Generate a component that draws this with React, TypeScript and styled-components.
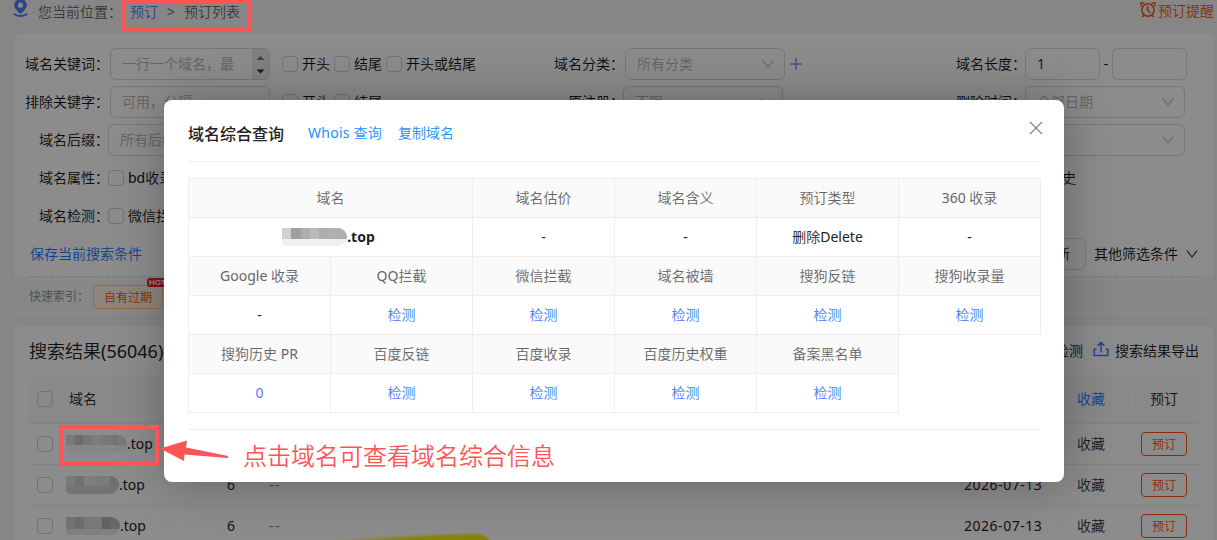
import React from 'react';
import styled, { createGlobalStyle } from 'styled-components';

const Palette = {
  BLUE: '#4d7cfe',
  LINK: '#1677ff',
  ORANGE: '#ff4d0d',
  MARK: '#ff5454',
  BORDER: '#d9d9d9',
  PLACEHOLDER: '#b4b4b4',
};

const results = [
  { id: 1, blocks: ['#dedede', '#cbc2be', '#d2d9dc', '#e2e4e5', '#dadada', '#d4d4d6', '#dedee0'], light: '#f5f5f5', width: 61, bottom: 8 },
  { id: 2, blocks: ['#dedddd', '#d0cbcb', '#e3e6e9', '#dee2e4', '#dbdfe1', '#c6cace'], light: '#d4d4d6', width: 53, bottom: 8 },
  { id: 3, blocks: ['#cfcfd1', '#c2c4c4', '#d8dbdb', '#dcdcdc', '#b6b1b1', '#c0bebe'], light: '#eaeaea', width: 54, bottom: 6 },
];

type CellData = { text: string; kind?: 'label' | 'link' | 'name'; span?: number };

const label = (text: string, span?: number): CellData => ({ text, kind: 'label', span });
const link = (text: string): CellData => ({ text, kind: 'link' });

const cells: CellData[] = [
  label('域名', 2),
  label('域名估价'),
  label('域名含义'),
  label('预订类型'),
  label('360 收录'),
  { text: '.top', kind: 'name', span: 2 },
  { text: '-' },
  { text: '-' },
  { text: '删除Delete' },
  { text: '-' },
  label('Google 收录'),
  label('QQ拦截'),
  label('微信拦截'),
  label('域名被墙'),
  label('搜狗反链'),
  label('搜狗收录量'),
  { text: '-' },
  link('检测'),
  link('检测'),
  link('检测'),
  link('检测'),
  link('检测'),
  label('搜狗历史 PR'),
  label('百度反链'),
  label('百度收录'),
  label('百度历史权重'),
];

const lastCells: CellData[] = [link('0'), link('检测'), link('检测'), link('检测'), link('检测')];

const PinIcon = () => (
  <svg width="15" height="18" viewBox="0 0 15 18" fill="none">
    <path fillRule="evenodd" clipRule="evenodd" d="M7.5 -1C4 -1 1.2 1.6 1.2 5C1.2 8.6 4.6 11.4 7.5 14C10.4 11.4 13.8 8.6 13.8 5C13.8 1.6 11 -1 7.5 -1ZM7.5 2.6A2.6 2.6 0 1 1 7.5 7.8A2.6 2.6 0 1 1 7.5 2.6Z" fill={Palette.BLUE} />
    <path d="M1.2 14.2Q7.5 17.8 13.8 14.2" stroke={Palette.BLUE} strokeWidth="1.8" strokeLinecap="round" />
  </svg>
);

const AlarmIcon = () => (
  <svg width="16" height="16" viewBox="0 0 16 16" fill="none" stroke={Palette.ORANGE} strokeWidth="1.5">
    <circle cx="8" cy="8" r="6.2" />
    <path d="M7.6 4.2V8.2L10.2 10.8M0.9 4.2V1H4.2M11.8 1H15.1V4.2M2.4 15L4.2 13M13.6 15L11.8 13" />
  </svg>
);

const Chevron = ({ color = '#bfbfbf' }: { color?: string }) => (
  <svg width="12" height="12" viewBox="0 0 12 12" fill="none" stroke={color} strokeWidth="1.1">
    <path d="M1 2.6L6 9.2L11 2.6" />
  </svg>
);

const ExportIcon = () => (
  <svg width="16" height="16" viewBox="0 0 16 16" fill="none" stroke={Palette.BLUE} strokeWidth="1.5">
    <path d="M3.5 8.2H1.2V14.6H14.8V8.2H12.5M8 11.5V1.6M4.6 4.8L8 1.4L11.4 4.8" />
  </svg>
);

const Check = ({ text }: { text: string }) => (
  <CheckLabel>
    <Box />
    {text}
  </CheckLabel>
);

const Select = ({ text }: { text: string }) => (
  <Field width={160}>
    <span>{text}</span>
    <Chevron />
  </Field>
);

interface MosaicProps {
  blocks: string[];
  light: string;
  width: number;
  bottom?: number;
}

const Mosaic = ({ blocks, light, width, bottom = 7 }: MosaicProps) => (
  <MosaicBox width={width} light={light} bottom={bottom}>
    {blocks.map((color, i) => (
      <i key={i} style={{ background: color }} />
    ))}
  </MosaicBox>
);

const Filters = () => (
  <FilterCard>
    <FilterGrid>
      <Cell>
        <Label>域名关键词：</Label>
        <Field width={160} shift={1} hasSpin>
          <span>一行一个域名，最</span>
          <Spin>
            <svg width="17" height="30" viewBox="0 0 17 30">
              <path d="M4.5 11L8.5 7L12.5 11Z" fill="#777" />
              <path d="M4.5 20.5H12.5L8.5 24.5Z" fill="#333" />
            </svg>
          </Spin>
        </Field>
        <Checks>
          <Check text="开头" />
          <Check text="结尾" />
          <Check text="开头或结尾" />
        </Checks>
      </Cell>
      <Cell>
        <Label short>域名分类：</Label>
        <ShiftBox>
          <Select text="所有分类" />
        </ShiftBox>
        <Plus width="14" height="14" viewBox="0 0 14 14">
          <path d="M7 1V13M1 7H13" stroke="#7f9cf5" strokeWidth="1.6" />
        </Plus>
      </Cell>
      <Cell>
        <Label short>域名长度：</Label>
        <Field width={75} shift={-1} dark>
          1
        </Field>
        <Dash>-</Dash>
        <Field width={75} />
      </Cell>

      <Cell>
        <Label>排除关键字：</Label>
        <Field width={160} shift={1}>
          <span>可用，分隔</span>
        </Field>
        <Checks>
          <Check text="开头" />
          <Check text="结尾" />
        </Checks>
      </Cell>
      <Cell>
        <Label short>原注册：</Label>
        <ShiftBox back>
          <Select text="不限" />
        </ShiftBox>
      </Cell>
      <Cell>
        <Label short>删除时间：</Label>
        <ShiftBox back>
          <Select text="全部日期" />
        </ShiftBox>
      </Cell>

      <Cell>
        <Label>域名后缀：</Label>
        <ShiftBox back>
          <Select text="所有后缀" />
        </ShiftBox>
      </Cell>
      <Cell />
      <Cell>
        <Label short>注册商：</Label>
        <ShiftBox back>
          <Select text="不限" />
        </ShiftBox>
      </Cell>

      <Cell>
        <Label>域名属性：</Label>
        <ShiftBox back>
          <Check text="bd收录" />
        </ShiftBox>
      </Cell>
      <Cell />
      <Cell>
        <History>
          <Check text="历史" />
        </History>
      </Cell>

      <Cell>
        <Label>域名检测：</Label>
        <ShiftBox back>
          <Check text="微信拦截" />
        </ShiftBox>
      </Cell>
      <Cell />
      <Cell />
    </FilterGrid>
    <ActionRow>
      <TextLink>保存当前搜索条件</TextLink>
      <MoreGroup>
        <RefreshButton>刷新</RefreshButton>
        <span>其他筛选条件</span>
        <Chevron color="#333" />
      </MoreGroup>
    </ActionRow>
    <QuickRow>
      <span>快速索引：</span>
      <QuickTag>
        自有过期
        <HotBadge>HOT</HotBadge>
      </QuickTag>
    </QuickRow>
  </FilterCard>
);

const Results = () => (
  <ResultCard>
    <ResultHeader>
      <h2>搜索结果(56046)</h2>
      <ResultTools>
        <span>检测</span>
        <ExportIcon />
        <span>搜索结果导出</span>
      </ResultTools>
    </ResultHeader>
    <Row head>
      <Box />
      <HeadName>域名</HeadName>
      <span />
      <span />
      <span />
      <Favorite active>收藏</Favorite>
      <HeadBook>预订</HeadBook>
    </Row>
    {results.map((item) => (
      <Row key={item.id}>
        <Box />
        <Name>
          <Mosaic blocks={item.blocks} light={item.light} width={item.width} bottom={item.bottom} />
          .top
        </Name>
        <span>{item.id > 1 && '6'}</span>
        <Empty>{item.id > 1 && '--'}</Empty>
        <DateText>{item.id > 1 && '2026-07-13'}</DateText>
        <Favorite>收藏</Favorite>
        <BookButton>预订</BookButton>
      </Row>
    ))}
    <Highlight width="190" height="20" viewBox="0 0 190 20">
      <defs>
        <linearGradient id="marker" x1="0" x2="1" y1="0" y2="0">
          <stop offset="0.15" stopColor="#e8e010" stopOpacity="0.2" />
          <stop offset="0.6" stopColor="#f5ec10" />
        </linearGradient>
        <filter id="soft">
          <feGaussianBlur stdDeviation="0.9" />
        </filter>
      </defs>
      <path d="M8 9L60 5.5L158 2Q170 1 176 8L182 20H0Z" fill="url(#marker)" filter="url(#soft)" />
    </Highlight>
  </ResultCard>
);

const DomainModal = () => (
  <Modal>
    <ModalHeader>
      <h3>域名综合查询</h3>
      <a>Whois 查询</a>
      <a>复制域名</a>
      <CloseIcon width="14" height="14" viewBox="0 0 14 14">
        <path d="M1 1L13 13M13 1L1 13" stroke="#8c8c8c" strokeWidth="1.4" />
      </CloseIcon>
    </ModalHeader>
    <InfoGrid>
      {cells.map((cell, i) => (
        <InfoCell key={i} kind={cell.kind} span={cell.span}>
          {cell.kind === 'name' && <Mosaic blocks={['#d0d0d0', '#9e9e9e', '#adadad', '#b9b9b9', '#adadad', '#b0b0b0', '#adadad']} light="#f0f0f0" width={65} />}
          {cell.text}
        </InfoCell>
      ))}
      <InfoCell kind="label">备案黑名单</InfoCell>
      <span />
      {lastCells.map((cell, i) => (
        <InfoCell key={i} kind={cell.kind}>
          {cell.text}
        </InfoCell>
      ))}
    </InfoGrid>
    <ModalFooter />
  </Modal>
);

const App = () => (
  <Page>
    <GlobalStyle />
    <TopBar>
      <PinIcon />
      <Crumbs>
        <span>您当前位置：</span>
        <a>预订</a>
        <em>&gt;</em>
        <span>预订列表</span>
      </Crumbs>
      <Remind>
        <AlarmIcon />
        预订提醒
      </Remind>
    </TopBar>
    <Filters />
    <Results />
    <Mask />
    <DomainModal />
    <MarkBox x={122} y={0} w={129} h={32} />
    <MarkBox x={59} y={425} w={100} h={41} />
    <Arrow width="70" height="24" viewBox="0 0 70 24" fill={Palette.MARK}>
      <path d="M0 8.5L27 0.5L26 7.5L68 16V18L24.5 14.5L24 21Z" />
    </Arrow>
    <MarkText>点击域名可查看域名综合信息</MarkText>
  </Page>
);

export default App;

const GlobalStyle = createGlobalStyle`
  * {
    box-sizing: border-box;
  }
  body {
    margin: 0;
    font-family: 'Noto Sans', 'Noto Sans CJK SC DemiLight', 'Noto Sans CJK SC', sans-serif;
    font-size: 14px;
    line-height: 20px;
    color: #111;
  }
  h2, h3 {
    margin: 0;
  }
  em, i {
    font-style: normal;
  }
`;

const Page = styled.div`
  position: relative;
  width: 1217px;
  height: 540px;
  overflow: hidden;
  background: #f5f5f5;
`;

const TopBar = styled.div`
  display: flex;
  align-items: flex-start;
  height: 33px;
  padding: 0 3px 0 13px;
`;

const Crumbs = styled.div`
  display: flex;
  padding: 2px 0 0 10px;
  color: #666;
  a {
    margin-left: 8px;
    color: ${Palette.BLUE};
  }
  em {
    margin: 0 9px;
  }
`;

const Remind = styled.div`
  display: flex;
  align-items: center;
  gap: 2px;
  margin-left: auto;
  padding-top: 1px;
  color: ${Palette.ORANGE};
  svg {
    margin-top: -3px;
  }
`;

const FilterCard = styled.section`
  width: 1200px;
  height: 284px;
  margin-left: 14px;
  padding-top: 12px;
  overflow: hidden;
  border-radius: 8px;
  background: #fff;
  box-shadow: 0 1px 4px rgba(0, 0, 0, 0.05);
`;

const FilterGrid = styled.div`
  display: grid;
  grid-template-columns: 529px 402px 1fr;
  grid-auto-rows: 38px;
  padding-left: 11px;
`;

const Cell = styled.div`
  display: flex;
  align-items: center;
`;

const Label = styled.label<{ short?: boolean }>`
  flex-shrink: 0;
  width: ${(props) => (props.short ? 70 : 84)}px;
  text-align: right;
  white-space: nowrap;
`;

const ShiftBox = styled.div<{ back?: boolean }>`
  margin-left: ${(props) => (props.back ? -1 : 1)}px;
`;

const Field = styled.div<{ width: number; shift?: number; dark?: boolean; hasSpin?: boolean }>`
  display: flex;
  align-items: center;
  justify-content: space-between;
  flex-shrink: 0;
  width: ${(props) => props.width}px;
  height: 32px;
  margin-left: ${(props) => props.shift || 0}px;
  padding: ${(props) => (props.hasSpin ? '0 0 0 11px' : '0 10px 0 11px')};
  overflow: hidden;
  border: 1px solid ${Palette.BORDER};
  border-radius: 6px;
  color: ${(props) => (props.dark ? '#333' : Palette.PLACEHOLDER)};
  white-space: nowrap;
`;

const Spin = styled.div`
  width: 17px;
  height: 30px;
  background: #ececec;
`;

const Checks = styled.div`
  display: flex;
  gap: 4px;
  margin-left: 12px;
`;

const CheckLabel = styled.div`
  display: flex;
  align-items: center;
  gap: 4px;
  white-space: nowrap;
`;

const Box = styled.span`
  width: 16px;
  height: 16px;
  border: 1px solid #cfcfcf;
  border-radius: 4px;
`;

const Plus = styled.svg`
  margin-left: 4px;
`;

const Dash = styled.span`
  width: 12px;
  text-align: center;
`;

const History = styled.div`
  margin-left: 72px;
`;

const ActionRow = styled.div`
  display: flex;
  align-items: center;
  justify-content: space-between;
  height: 38px;
  padding: 0 16px;
`;

const TextLink = styled.a`
  color: ${Palette.LINK};
`;

const MoreGroup = styled.div`
  display: flex;
  align-items: center;
  gap: 8px;
`;

const RefreshButton = styled.button`
  width: 60px;
  height: 32px;
  padding: 0;
  border: 1px solid ${Palette.BORDER};
  border-radius: 6px;
  background: #fff;
  font: inherit;
`;

const QuickRow = styled.div`
  display: flex;
  align-items: center;
  height: 41px;
  margin-top: 3px;
  padding-left: 15px;
  background: repeating-linear-gradient(90deg, #d9dcdc 0 4px, transparent 4px 7px) 15px 0 / 1170px 1px no-repeat, #f4f8f7;
  font-size: 12px;
  color: #888;
`;

const QuickTag = styled.div`
  position: relative;
  width: 70px;
  height: 24px;
  margin-left: 4px;
  border: 1px solid #ffc58f;
  border-radius: 4px;
  background: #fff5e8;
  color: #ff4d0d;
  line-height: 23px;
  text-align: center;
`;

const HotBadge = styled.span`
  position: absolute;
  top: -8px;
  right: -12px;
  width: 27px;
  height: 9px;
  padding-left: 2px;
  border-radius: 3px;
  background: #f5222d;
  color: #fff;
  font-family: 'Liberation Sans', sans-serif;
  font-size: 8px;
  font-weight: bold;
  line-height: 9px;
  text-align: left;
`;

const ResultCard = styled.section`
  position: relative;
  width: 1200px;
  height: 240px;
  margin: 9px 0 0 14px;
  padding: 0 15px;
  border-radius: 8px;
  background: #fff;
`;

const ResultHeader = styled.div`
  display: flex;
  align-items: center;
  justify-content: space-between;
  height: 49px;
  h2 {
    font-size: 18px;
    font-weight: 400;
    color: #222;
  }
`;

const ResultTools = styled.div`
  display: flex;
  align-items: center;
  svg {
    margin: -4px 6px 0 10px;
  }
`;

const Row = styled.div<{ head?: boolean }>`
  display: grid;
  grid-template-columns: 29px 161px 42px 695px 97px 75px 1fr;
  align-items: center;
  height: ${(props) => (props.head ? 49 : 41)}px;
  padding-left: 8px;
  border-bottom: 1px solid #ededed;
  border-radius: ${(props) => (props.head ? '8px 8px 0 0' : 0)};
  background: ${(props) => (props.head ? '#fafafa' : 'none')};
  color: #222;
`;

const HeadName = styled.span`
  padding-left: 3px;
`;

const Name = styled.div`
  display: flex;
  align-items: center;
`;

const Empty = styled.span`
  color: #888;
  letter-spacing: 1.5px;
`;

const DateText = styled.span`
  letter-spacing: 0.52px;
`;

const Favorite = styled.span<{ active?: boolean }>`
  padding-left: 16px;
  border-right: ${(props) => (props.active ? '1px solid #f0f0f0' : 'none')};
  margin-right: 7px;
  color: ${(props) => (props.active ? Palette.LINK : '#333')};
`;

const HeadBook = styled.span`
  padding-left: 14px;
`;

const BookButton = styled.button`
  width: 46px;
  height: 24px;
  margin-left: 5px;
  padding: 0;
  border: 1px solid ${Palette.ORANGE};
  border-radius: 4px;
  background: #fff;
  color: ${Palette.ORANGE};
  font-family: inherit;
  font-size: 12px;
`;

const MosaicBox = styled.span<{ width: number; light: string; bottom: number }>`
  display: flex;
  flex-shrink: 0;
  width: ${(props) => props.width}px;
  height: 18px;
  padding-bottom: ${(props) => props.bottom}px;
  overflow: hidden;
  border-radius: 0 9px 9px 4px;
  background: ${(props) => props.light};
  i {
    flex: 1;
  }
`;

const Highlight = styled.svg`
  position: absolute;
  top: 206px;
  left: 300px;
`;

const Mask = styled.div`
  position: absolute;
  inset: 0;
  background: rgba(0, 0, 0, 0.45);
`;

const Modal = styled.div`
  position: absolute;
  top: 100px;
  left: 164px;
  width: 900px;
  height: 382px;
  padding: 0 24px;
  border-radius: 8px;
  background: #fff;
  box-shadow: 1px 1px 50px rgba(0, 0, 0, 0.3);
`;

const ModalHeader = styled.div`
  display: flex;
  align-items: center;
  height: 62px;
  padding-top: 4px;
  border-bottom: 1px solid #eee;
  h3 {
    margin-right: 24px;
    font-family: 'Noto Sans CJK SC', sans-serif;
    font-size: 16px;
    font-weight: 500;
    line-height: 22px;
    color: #222;
  }
  a {
    margin-right: 16px;
    color: #1890ff;
  }
  h3 + a {
    width: 74px;
    letter-spacing: 0.25px;
    white-space: nowrap;
  }
`;

const CloseIcon = styled.svg`
  margin: -9px -3px 0 auto;
`;

const InfoGrid = styled.div`
  display: grid;
  grid-template-columns: repeat(6, 142px);
  grid-auto-rows: 39px;
  margin-top: 16px;
`;

const InfoCell = styled.div<{ kind?: string; span?: number }>`
  display: flex;
  align-items: center;
  justify-content: center;
  grid-column: span ${(props) => props.span || 1};
  margin: 0 -1px -1px 0;
  padding-right: ${(props) => (props.kind === 'name' ? 4 : 0)}px;
  border: 1px solid #eee;
  background: ${(props) => (props.kind === 'label' ? '#fafafa' : '#fff')};
  color: ${(props) => (props.kind === 'label' ? '#666' : props.kind === 'link' ? Palette.BLUE : '#222')};
  font-weight: ${(props) => (props.kind === 'name' ? 700 : 400)};
`;

const ModalFooter = styled.div`
  margin-top: 17px;
  border-top: 1px solid #eee;
`;

const MarkBox = styled.div<{ x: number; y: number; w: number; h: number }>`
  position: absolute;
  left: ${(props) => props.x}px;
  top: ${(props) => props.y}px;
  width: ${(props) => props.w}px;
  height: ${(props) => props.h}px;
  border: 4px solid ${Palette.MARK};
  border-radius: 2px;
`;

const Arrow = styled.svg`
  position: absolute;
  top: 440px;
  left: 160px;
`;

const MarkText = styled.div`
  position: absolute;
  top: 438px;
  left: 243px;
  color: ${Palette.MARK};
  font-size: 24px;
  line-height: 36px;
  white-space: nowrap;
`;
